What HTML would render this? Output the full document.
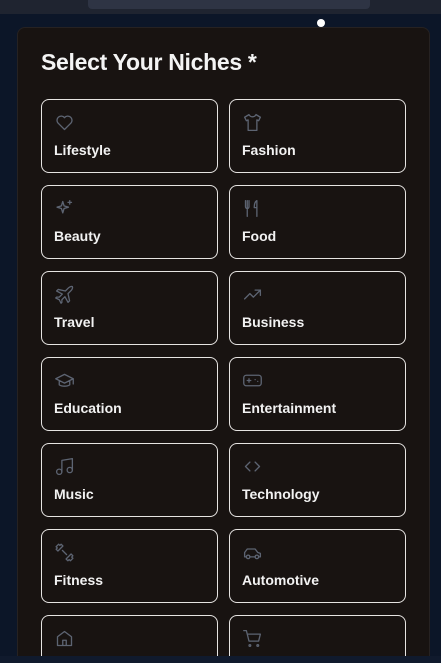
<!DOCTYPE html>
<html><head><style>
*{margin:0;padding:0;box-sizing:border-box}
html,body{width:441px;height:663px;overflow:hidden}
body{background:#0c1628;font-family:"Liberation Sans",sans-serif}
#w{position:relative;width:441px;height:663px;overflow:hidden}
.bar{position:absolute;left:0;top:0;width:441px;height:14px;background:#1f2430}
.url{position:absolute;left:88px;top:0;width:282px;height:9px;background:#2e3444;border-radius:0 0 4px 4px}
.panel{position:absolute;left:17px;top:27px;width:413px;height:640px;background:#181311;border-radius:8px;border:1px solid #262222}
h1{position:absolute;left:41px;top:49px;color:#f4f4f4;font-size:23px;font-weight:bold;letter-spacing:-0.3px}
.card{position:absolute;width:177px;height:74px;border:1px solid #e6e4e2;border-radius:8px;background:#181311}
.card svg{position:absolute;left:12px;top:12px;width:21px;height:21px;fill:none;stroke:#5d6472;stroke-width:1.5;stroke-linecap:round;stroke-linejoin:round}
.card span{position:absolute;left:12px;top:42px;color:#f2f2f2;font-size:14px;font-weight:bold}
.bot{position:absolute;left:0;top:656px;width:441px;height:7px;background:#101a2d;z-index:5}
.dot{position:absolute;width:8px;height:8px;border-radius:50%;background:#fff}
</style></head><body><div id="w">
<div class="bar"><div class="url"></div></div>
<div class="dot" style="left:317px;top:19px"></div>
<div class="panel"></div>
<h1>Select Your Niches *</h1>

<div class="card" style="left:41px;top:99px"><svg viewBox="0 0 24 24"><path d="M12 20l-7.5-7.5a4.5 4.5 0 0 1 7.5-6 4.5 4.5 0 0 1 7.5 6z"/></svg><span>Lifestyle</span></div>
<div class="card" style="left:229px;top:99px"><svg viewBox="0 0 24 24"><path d="M8 3l-5 3 2 4 2-1v12h10V9l2 1 2-4-5-3c-1 2-2.5 2.5-4 2.5S9 5 8 3z"/></svg><span>Fashion</span></div>

<div class="card" style="left:41px;top:185px"><svg viewBox="0 0 24 24"><path d="M10 4l1.5 5 5 1.5-5 1.5-1.5 5-1.5-5-5-1.5 5-1.5zM18 3v4M16 5h4"/></svg><span>Beauty</span></div>
<div class="card" style="left:229px;top:185px"><svg viewBox="0 0 24 24"><path d="M4 3v7a2 2 0 0 0 4 0V3M6 3v18M17 21V3c-2 1-3 4-3 8h3"/></svg><span>Food</span></div>

<div class="card" style="left:41px;top:271px"><svg viewBox="0 0 24 24"><path d="M17.8 19.2L16 11l3.5-3.5C21 6 21.5 4 21 3c-1-.5-3 0-4.5 1.5L13 8 4.8 6.2 3 8l6.5 3.5L6 15H3l-1 1 4 2 2 4 1-1v-3l3.5-3.5L16 21z"/></svg><span>Travel</span></div>
<div class="card" style="left:229px;top:271px"><svg viewBox="0 0 24 24"><path d="M3 17l6-6 4 4 8-8M15 7h6v6"/></svg><span>Business</span></div>

<div class="card" style="left:41px;top:357px"><svg viewBox="0 0 24 24"><path d="M2 10l10-5 10 5-10 5zM6 12v5c3 2 9 2 12 0v-5M22 10v6"/></svg><span>Education</span></div>
<div class="card" style="left:229px;top:357px"><svg viewBox="0 0 24 24"><rect x="2" y="6" width="20" height="12" rx="3"/><path d="M6 12h4M8 10v4M15 11h.01M18 13h.01"/></svg><span>Entertainment</span></div>

<div class="card" style="left:41px;top:443px"><svg viewBox="0 0 24 24"><path d="M9 18V5l12-2v13"/><circle cx="6" cy="18" r="3"/><circle cx="18" cy="16" r="3"/></svg><span>Music</span></div>
<div class="card" style="left:229px;top:443px"><svg viewBox="0 0 24 24"><path d="M9 7l-5 5 5 5M15 7l5 5-5 5"/></svg><span>Technology</span></div>

<div class="card" style="left:41px;top:529px"><svg viewBox="0 0 24 24"><path d="M14.4 14.4L9.6 9.6M18.7 21.5l-1.4-1.4-1.4 1.4-2.1-2.1 5.7-5.7 2.1 2.1-1.4 1.4 1.4 1.4zM5.3 2.5l1.4 1.4 1.4-1.4 2.1 2.1-5.7 5.7-2.1-2.1 1.4-1.4-1.4-1.4z"/></svg><span>Fitness</span></div>
<div class="card" style="left:229px;top:529px"><svg viewBox="0 0 24 24"><path d="M19 17h2v-4l-3-1-3-4H6L3 12v5h2"/><circle cx="7" cy="17" r="2"/><circle cx="17" cy="17" r="2"/><path d="M9 17h6"/></svg><span>Automotive</span></div>

<div class="card" style="left:41px;top:615px"><svg viewBox="0 0 24 24"><path d="M4 10l8-6 8 6v10H4zM10 20v-6h4v6"/></svg><span></span></div>
<div class="card" style="left:229px;top:615px"><svg viewBox="0 0 24 24"><path d="M2 3h3l3 12h11l2-8H6"/><circle cx="9" cy="20" r="1"/><circle cx="18" cy="20" r="1"/></svg><span></span></div>

<div class="bot"></div>
</div></body></html>
